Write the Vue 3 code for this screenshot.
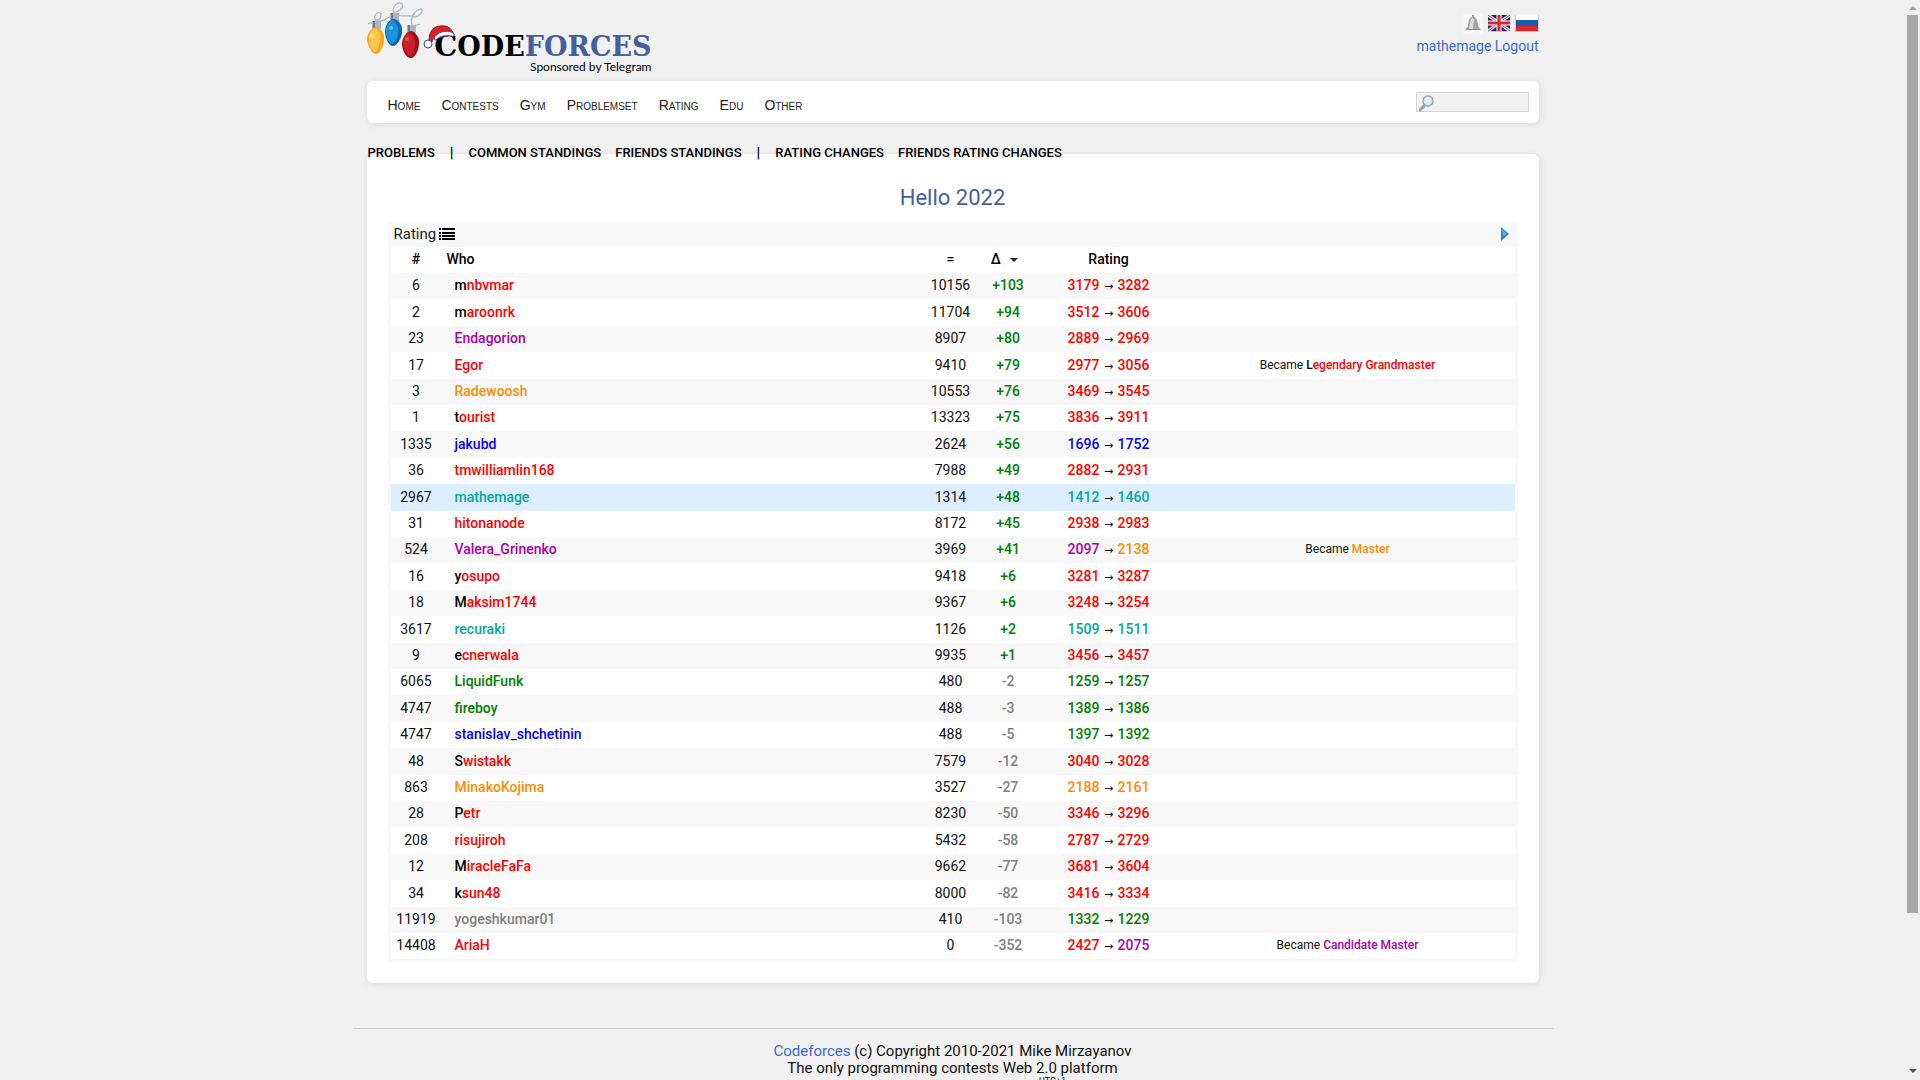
<script setup>
const menu = ['Home', 'Contests', 'Gym', 'Problemset', 'Rating', 'Edu', 'Other']

// rank, handle, handle colour, solved points, delta, old rating, new rating, old colour, new colour, new title
const rows = [
  [6, 'mnbvmar', 'legend', 10156, 103, 3179, 3282, 'red', 'red'],
  [2, 'maroonrk', 'legend', 11704, 94, 3512, 3606, 'red', 'red'],
  [23, 'Endagorion', 'violet', 8907, 80, 2889, 2969, 'red', 'red'],
  [17, 'Egor', 'red', 9410, 79, 2977, 3056, 'red', 'red', 'Legendary Grandmaster', 'legend'],
  [3, 'Radewoosh', 'orange', 10553, 76, 3469, 3545, 'red', 'red'],
  [1, 'tourist', 'legend', 13323, 75, 3836, 3911, 'red', 'red'],
  [1335, 'jakubd', 'blue', 2624, 56, 1696, 1752, 'blue', 'blue'],
  [36, 'tmwilliamlin168', 'red', 7988, 49, 2882, 2931, 'red', 'red'],
  [2967, 'mathemage', 'cyan', 1314, 48, 1412, 1460, 'cyan', 'cyan'],
  [31, 'hitonanode', 'red', 8172, 45, 2938, 2983, 'red', 'red'],
  [524, 'Valera_Grinenko', 'violet', 3969, 41, 2097, 2138, 'violet', 'orange', 'Master', 'orange'],
  [16, 'yosupo', 'legend', 9418, 6, 3281, 3287, 'red', 'red'],
  [18, 'Maksim1744', 'legend', 9367, 6, 3248, 3254, 'red', 'red'],
  [3617, 'recuraki', 'cyan', 1126, 2, 1509, 1511, 'cyan', 'cyan'],
  [9, 'ecnerwala', 'legend', 9935, 1, 3456, 3457, 'red', 'red'],
  [6065, 'LiquidFunk', 'green', 480, -2, 1259, 1257, 'green', 'green'],
  [4747, 'fireboy', 'green', 488, -3, 1389, 1386, 'green', 'green'],
  [4747, 'stanislav_shchetinin', 'blue', 488, -5, 1397, 1392, 'green', 'green'],
  [48, 'Swistakk', 'legend', 7579, -12, 3040, 3028, 'red', 'red'],
  [863, 'MinakoKojima', 'orange', 3527, -27, 2188, 2161, 'orange', 'orange'],
  [28, 'Petr', 'legend', 8230, -50, 3346, 3296, 'red', 'red'],
  [208, 'risujiroh', 'red', 5432, -58, 2787, 2729, 'red', 'red'],
  [12, 'MiracleFaFa', 'legend', 9662, -77, 3681, 3604, 'red', 'red'],
  [34, 'ksun48', 'legend', 8000, -82, 3416, 3334, 'red', 'red'],
  [11919, 'yogeshkumar01', 'gray', 410, -103, 1332, 1229, 'green', 'green'],
  [14408, 'AriaH', 'red', 0, -352, 2427, 2075, 'red', 'violet', 'Candidate Master', 'violet'],
].map(([rank, handle, tone, points, delta, before, after, beforeTone, afterTone, title, titleTone]) => ({
  rank, handle, tone, points, delta, before, after, beforeTone, afterTone, title, titleTone,
}))
</script>

<template>
  <div class="window">
    <div class="page">
      <header class="header">
        <a class="logo" href="#">
          <span class="wordmark"><span class="first">C</span>ODE<span class="forces">FORCES</span></span>
          <span class="sponsor">Sponsored by Telegram</span>
          <svg class="lights" width="110" height="64" viewBox="0 0 110 64" aria-hidden="true">
            <g fill="none" stroke="#a9bac2" stroke-width="1.3">
              <path d="M1 24C7 22 15 20 14 14C12 10 5 15 9 20C13 23 20 19 25 15C28 11 38 10 35 4C31 0 24 7 27 14C33 18 42 14 48 17C55 15 57 8 53 9C47 11 43 18 45 25M45 28C45 24 50 26 53 24" />
            </g>
            <g fill="#aab5bd"><rect x="5" y="21" width="9" height="8" /><rect x="23" y="13" width="9" height="8" /><rect x="40" y="25" width="9" height="8" /></g>
            <g fill="#6f7e89"><rect x="6" y="21" width="2" height="7" /><rect x="24" y="13" width="2" height="7" /><rect x="41" y="25" width="2" height="7" /></g>
            <path d="M9 27C14 28 18 34 17 40C17 46 13 54 9 54C5 54 1 46 0 40C0 34 4 28 9 27Z" fill="#f8a51f" />
            <path d="M9 28C13 31 14 37 13 42C12 48 10 51 8 52C4 50 1 43 2 38C2 33 5 29 9 28Z" fill="#fbc64a" />
            <path d="M27 19C32 20 36 26 35 32C35 38 30 46 26 46C22 46 18 38 18 32C18 26 21 20 27 19Z" fill="#0c69b5" />
            <path d="M26 20C31 24 32 29 31 34C30 40 27 43 25 44C21 42 19 36 19 31C19 26 21 22 26 20Z" fill="#1b93d8" />
            <path d="M44 31C49 32 53 38 52 44C52 50 48 58 44 58C39 58 35 50 35 44C35 38 39 32 44 31Z" fill="#a00d19" />
            <path d="M42 32C48 36 49 42 48 47C47 53 44 56 42 56C38 53 36 47 36 43C36 38 38 34 42 32Z" fill="#c91f2c" />
            <circle cx="5" cy="36" r="2" fill="#ffe394" /><circle cx="24" cy="28" r="2" fill="#5fc3f4" /><circle cx="40" cy="39" r="2" fill="#e6563c" />
            <path d="M62 42C62 34 64 27 73 26C81 25 85 29 87 35L69 38C66 38 65 40 65 42Z" fill="#df1f27" stroke="#8c1119" />
            <path d="M67 39C69 32 80 29 86 33C88 35 87 37 84 36C77 35 73 36 69 40Z" fill="#fff" stroke="#34529a" />
            <circle cx="61" cy="44" r="4" fill="#fff" stroke="#34529a" />
          </svg>
        </a>
        <div class="account">
          <div class="flags">
            <button class="bell" type="button" aria-label="Notifications">
              <svg width="20" height="20" viewBox="0 0 20 20"><rect width="20" height="20" fill="#f7f7f7" /><path d="M9 1h2v2c3 1 4 5 4 9l3 4H2l3-4C5 8 6 4 9 3Z" fill="#a6a6a6" /><path d="M9 4C7 6 7 11 6 15h4l1-10Z" fill="#dedede" /><path d="M3 15h14v1H3Z" fill="#888" /></svg>
            </button>
            <a href="#" aria-label="English">
              <svg width="24" height="20" viewBox="0 0 24 20"><rect x="1" y="1" width="22" height="17" rx="1" fill="#c4c4c4" /><rect x="1" y="1" width="22" height="16" rx="1" fill="#1d2b72" /><path d="M1 1L23 17M23 1L1 17" stroke="#fff" stroke-width="3" /><path d="M1 1L23 17M23 1L1 17" stroke="#d62533" /><path d="M12 1V17M1 9H23" stroke="#fff" stroke-width="5" /><path d="M12 1V17M1 9H23" stroke="#d62533" stroke-width="3" /></svg>
            </a>
            <a href="#" aria-label="Russian">
              <svg width="24" height="20" viewBox="0 0 24 20"><rect y="1" width="24" height="17" fill="#ccc" /><rect x="1" y="1" width="22" height="5" fill="#fff" /><rect x="1" y="6" width="22" height="6" fill="#1c5ba9" /><rect x="1" y="12" width="22" height="5" fill="#e1232c" /></svg>
            </a>
          </div>
          <div class="session"><a href="#">mathemage</a> <a href="#">Logout</a></div>
        </div>
      </header>

      <nav class="menu card">
        <ul>
          <li v-for="item in menu" :key="item"><a href="#">{{ item }}</a></li>
        </ul>
        <label class="search">
          <svg width="16" height="18" viewBox="0 0 16 18" aria-hidden="true"><path d="M6 11L1 16" stroke="#999" stroke-width="3" stroke-linecap="round" /><circle cx="9" cy="7" r="5" fill="#d3effc" stroke="#a3a3a3" stroke-width="1.5" /><path d="M6 6Q7 4 10 4" stroke="#fff" stroke-width="2" fill="none" /></svg>
          <input type="text" aria-label="Search">
        </label>
      </nav>

      <nav class="tabs">
        <a href="#">Problems</a><span class="bar">|</span>
        <a href="#">Common standings</a><a class="next" href="#">Friends standings</a><span class="bar">|</span>
        <a href="#">Rating changes</a><a class="next" href="#">Friends rating changes</a>
      </nav>

      <main class="content card">
        <h1>Hello 2022</h1>
        <section class="standings">
          <div class="caption">
            <span>Rating</span>
            <svg width="16" height="14" viewBox="0 0 16 14" aria-hidden="true"><path d="M0 2h2M3 2h13M0 6h2M3 6h13M0 9h2M3 9h13M0 12h2M3 12h13" stroke="#000" stroke-width="2" /></svg>
            <button class="forward" type="button" aria-label="Next page">
              <svg width="8" height="14" viewBox="0 0 8 14"><path d="M0 0L8 7L0 14Z" fill="#2c83c9" /><path d="M1 2L6 7L2 9Z" fill="#55b9ee" /></svg>
            </button>
          </div>
          <table>
            <colgroup><col class="c-rank"><col><col class="c-points"><col class="c-delta"><col class="c-rating"><col class="c-title"></colgroup>
            <thead>
              <tr>
                <th>#</th><th class="who">Who</th><th>=</th>
                <th class="sorted">Δ <svg class="sort" width="8" height="5" viewBox="0 0 8 5" aria-hidden="true"><path d="M0 0H8L4 4Z" fill="#222" /></svg></th>
                <th>Rating</th><th></th>
              </tr>
            </thead>
            <tbody>
              <tr v-for="row in rows" :key="row.handle" :class="{ mine: row.handle === 'mathemage' }">
                <td>{{ row.rank }}</td>
                <td class="handle"><a href="#" :class="row.tone">{{ row.handle }}</a></td>
                <td>{{ row.points }}</td>
                <td class="delta" :class="row.delta > 0 ? 'green' : 'gray'">{{ row.delta > 0 ? '+' : '' }}{{ row.delta }}</td>
                <td class="rating"><b :class="row.beforeTone">{{ row.before }}</b> <span class="arrow">→</span> <b :class="row.afterTone">{{ row.after }}</b></td>
                <td class="title"><template v-if="row.title">Became <b :class="row.titleTone">{{ row.title }}</b></template></td>
              </tr>
            </tbody>
          </table>
        </section>
      </main>

      <footer>
        <div><a href="#">Codeforces</a> (c) Copyright 2010-2021 Mike Mirzayanov</div>
        <div>The only programming contests Web 2.0 platform</div>
        <div class="zone">UTC+1</div>
      </footer>
    </div>
    <div class="scrollbar" aria-hidden="true">
      <svg width="8" height="5" viewBox="0 0 8 5"><path d="M0 5H8L4 1Z" fill="#a3a3a3" /></svg>
      <div class="thumb"></div>
      <svg width="8" height="5" viewBox="0 0 8 5"><path d="M0 0H8L4 4Z" fill="#505050" /></svg>
    </div>
  </div>
</template>

<style>
body {
  background: #f1f1f1;
}
</style>

<style scoped>
.window {
  display: flex;
  height: 100vh;
  overflow: hidden;
  font-family: "Roboto", sans-serif;
  font-size: 15px;
  color: #222;
}

a {
  color: #3b6bd6;
  text-decoration: none;
}

button {
  padding: 0;
  border: 0;
  background: none;
}

svg {
  display: block;
}

.page {
  flex: 1;
  max-width: 1172px;
  margin: 0 auto;
}

.card {
  background: #fff;
  border-radius: 6px;
  box-shadow: 1px 1px 6px #d8d8d8;
}

.header {
  display: flex;
  justify-content: space-between;
  height: 81px;
}

.logo {
  position: relative;
  display: flex;
  flex-direction: column;
  align-items: flex-end;
  box-sizing: border-box;
  width: 290px;
  padding: 33px 5px 0 0;
  color: #000;
}

.lights {
  position: absolute;
  top: 0;
  left: 0;
}

.wordmark {
  font: bold 27px/28px "DejaVu Serif", serif;
  white-space: nowrap;
}

.first {
  font-size: 29px;
  line-height: 20px;
}

.forces {
  color: #445f9d;
}

.sponsor {
  font: 12px/12px "Lato", sans-serif;
}

.flags {
  display: flex;
  gap: 4px;
  justify-content: flex-end;
  padding-top: 14px;
}

.session {
  margin-top: 3px;
  font-size: 14px;
  line-height: 18px;
  text-align: right;
}

.menu {
  display: flex;
  justify-content: space-between;
  align-items: center;
  height: 42px;
  padding: 0 10px 0 21px;
}

.menu ul {
  display: flex;
  gap: 21px;
  margin: 0;
  padding: 5px 0 0;
  list-style: none;
  font-family: "Liberation Sans", sans-serif;
  font-size: 14px;
  font-variant: small-caps;
}

.menu li a {
  color: #222;
}

.search {
  position: relative;
}

.search svg {
  position: absolute;
  top: 2px;
  left: 3px;
}

.search input {
  display: block;
  box-sizing: border-box;
  width: 113px;
  height: 20px;
  padding: 0 4px 0 20px;
  border: 1px solid #d3d3d3;
  background: #f1f1f1;
}

.tabs {
  position: relative;
  display: flex;
  height: 31px;
  padding: 21px 0 0 1px;
  box-sizing: border-box;
  font-size: 13px;
  line-height: 18px;
  font-weight: 500;
  text-transform: uppercase;
}

.tabs a {
  color: #000;
}

.bar {
  margin: 0 15px;
  font-size: 15px;
  color: #000;
}

.next {
  margin-left: 14px;
}

.content {
  padding: 31px 21px 21px;
}

h1 {
  margin: 0 0 11px;
  font-size: 22px;
  line-height: 26px;
  font-weight: 400;
  text-align: center;
  color: #445f9d;
}

.standings {
  padding: 0 3px 3px;
  background: #f8f8f8;
}

.caption {
  display: flex;
  gap: 3px;
  align-items: center;
  box-sizing: border-box;
  height: 25px;
  padding: 0 6px 2px 3px;
}

.forward {
  margin-left: auto;
}

table {
  width: 100%;
  table-layout: fixed;
  border-collapse: collapse;
  background: #fff;
  font-size: 14px;
  line-height: 18px;
  text-align: center;
  color: #111;
}

.c-rank { width: 50px; }
.c-points { width: 57px; }
.c-delta { width: 58px; }
.c-rating { width: 143px; }
.c-title { width: 335px; }

th,
td {
  box-sizing: border-box;
  height: 26px;
  padding: 0 0 2px 1px;
}

th {
  font-weight: 500;
  color: #000;
}

tbody tr:nth-child(5n + 2) td,
tbody tr:nth-child(5n + 4) td {
  height: 27px;
}

tbody tr:nth-child(odd) {
  background: #f8f8f8;
}

tbody tr.mine {
  background: #ddeeff;
}

.who {
  padding-left: 6px;
  text-align: left;
}

.sorted {
  padding-right: 7px;
}

.sort {
  display: inline-block;
  margin-left: 6px;
  vertical-align: middle;
}

.handle {
  padding-left: 14px;
  text-align: left;
  font-weight: 500;
}

.delta,
.rating b,
.title b {
  font-weight: 500;
}

.arrow {
  margin: 0 1px;
  font-family: "DejaVu Sans", sans-serif;
  font-size: 11px;
  line-height: 12px;
}

.title {
  font-size: 12px;
}

.red,
.legend { color: #f00; }
.legend { display: inline-block; }
.legend::first-letter { color: #000; }
.orange { color: #ff8c00; }
.violet { color: #a0a; }
.blue { color: #00f; }
.cyan { color: #03a89e; }
.green { color: #008000; }
.gray { color: #808080; }

footer {
  margin: 45px -14px 0;
  padding-top: 14px;
  border-top: 1px solid #ccc;
  line-height: 17px;
  text-align: center;
  color: #111;
}

.zone {
  padding-left: 200px;
  font-size: 9px;
  line-height: 9px;
}

.scrollbar {
  display: flex;
  flex-direction: column;
  align-items: center;
  box-sizing: border-box;
  width: 15px;
  padding: 5px 0 6px;
  background: #f0f0f0;
}

.thumb {
  flex: none;
  width: 11px;
  height: 84%;
  margin: 5px 0 auto;
  background: #a8a8a8;
}
</style>
